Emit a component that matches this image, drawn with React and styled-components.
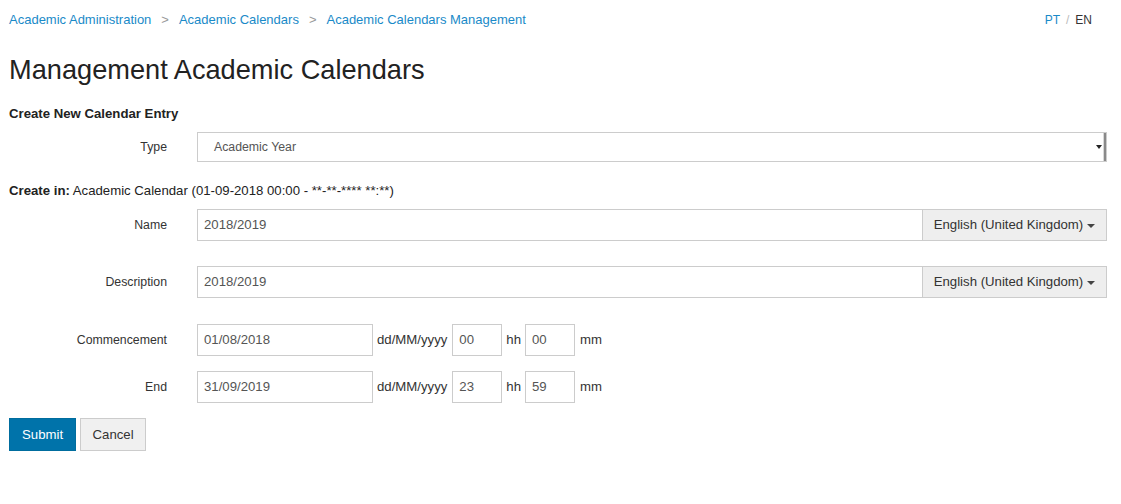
import React from 'react';
import styled, { createGlobalStyle } from 'styled-components';

const GlobalStyle = createGlobalStyle`
  body {
    margin: 0;
    background: #ffffff;
    font-family: "Liberation Sans", Arial, sans-serif;
    color: #333333;
  }
`;

const Page = styled.div`
  padding: 11px 14px 40px 9px;
  font-size: 13.2px;
  line-height: 18px;
`;

const TopBar = styled.div`
  display: flex;
  justify-content: space-between;
  align-items: center;
  height: 18px;
`;

const Crumbs = styled.nav`
  display: flex;
  align-items: center;
  gap: 10px;
  font-size: 13px;
`;

const CrumbLink = styled.a`
  color: #1a8ac8;
  text-decoration: none;
`;

const Sep = styled.span`
  color: #999999;
`;

const Langs = styled.div`
  display: flex;
  gap: 6px;
  margin-right: 15px;
  font-size: 12px;
`;

const Lang = styled.span`
  color: ${(props) => (props.$active ? '#333333' : '#1a8ac8')};
`;

const LangSep = styled.span`
  color: #bbbbbb;
`;

const Title = styled.h1`
  margin: 26px 0 0;
  font-size: 27.2px;
  line-height: 30px;
  font-weight: normal;
  color: #222222;
`;

const Section = styled.h5`
  margin: 20px 0 0;
  font-size: 13.2px;
  line-height: 18px;
  font-weight: bold;
  color: #222222;
`;

const Row = styled.div`
  display: grid;
  grid-template-columns: 158px 1fr;
  column-gap: 30px;
  align-items: center;
  margin-top: ${(props) => props.$top}px;
`;

const Label = styled.label`
  text-align: right;
  font-size: 12.3px;
  color: #333333;
`;

const SelectBox = styled.div`
  position: relative;
  height: 28px;
  border: 1px solid #cccccc;
  display: flex;
  align-items: center;
  padding-left: 16px;
  color: #555555;
  font-size: 12.3px;
`;

const SelectArrow = styled.span`
  position: absolute;
  right: 0;
  top: 0;
  bottom: 0;
  width: 8px;
  border-right: 2px solid #8a8a8a;
  box-shadow: inset -1px 0 0 #d8d8d8;
  &::after {
    content: '';
    position: absolute;
    left: 0;
    top: 12px;
    border-left: 3px solid transparent;
    border-right: 3px solid transparent;
    border-top: 4px solid #222222;
  }
`;

const CreateIn = styled.div`
  margin-top: 20px;
  color: #222222;
  b {
    font-weight: bold;
  }
`;

const Group = styled.div`
  display: flex;
  height: 32px;
`;

const Input = styled.div`
  box-sizing: border-box;
  height: 32px;
  width: ${(props) => (props.$w ? `${props.$w}px` : 'auto')};
  flex: ${(props) => (props.$w ? '0 0 auto' : '1 1 auto')};
  border: 1px solid #cccccc;
  padding: 0 6px;
  display: flex;
  align-items: center;
  color: #555555;
  background: #ffffff;
`;

const AddonButton = styled.div`
  box-sizing: border-box;
  width: 184px;
  border: 1px solid #cccccc;
  border-left: none;
  background: #eeeeee;
  display: flex;
  align-items: center;
  justify-content: center;
  gap: 4px;
  color: #333333;
`;

const Caret = styled.span`
  display: inline-block;
  border-left: 4px solid transparent;
  border-right: 4px solid transparent;
  border-top: 4px solid #444444;
  margin-top: 1px;
`;

const DateLine = styled.div`
  display: flex;
  align-items: center;
  height: 32px;
`;

const Unit = styled.span`
  color: #333333;
  margin: 0 ${(props) => props.$r}px 0 ${(props) => props.$l}px;
`;

const Actions = styled.div`
  display: flex;
  gap: 4px;
  margin-top: 15px;
`;

const Button = styled.button`
  height: 33px;
  padding: 0 ${(props) => (props.$primary ? 12 : 11.5)}px;
  font-family: inherit;
  font-size: 13.2px;
  border: 1px solid ${(props) => (props.$primary ? '#006d9e' : '#cccccc')};
  background: ${(props) => (props.$primary ? '#0073aa' : '#f0f0f0')};
  color: ${(props) => (props.$primary ? '#ffffff' : '#333333')};
  border-radius: 0;
`;

const LocalizedField = ({ label, value, top }) => (
  <Row $top={top}>
    <Label>{label}</Label>
    <Group>
      <Input>{value}</Input>
      <AddonButton>
        English (United Kingdom) <Caret />
      </AddonButton>
    </Group>
  </Row>
);

const DateField = ({ label, date, hh, mm, top }) => (
  <Row $top={top}>
    <Label>{label}</Label>
    <DateLine>
      <Input $w={176}>{date}</Input>
      <Unit $l={4} $r={5}>dd/MM/yyyy</Unit>
      <Input $w={50}>{hh}</Input>
      <Unit $l={4} $r={4}>hh</Unit>
      <Input $w={50}>{mm}</Input>
      <Unit $l={5} $r={0}>mm</Unit>
    </DateLine>
  </Row>
);

const App = () => (
  <>
    <GlobalStyle />
    <Page>
      <TopBar>
        <Crumbs>
          <CrumbLink href="#">Academic Administration</CrumbLink>
          <Sep>&gt;</Sep>
          <CrumbLink href="#">Academic Calendars</CrumbLink>
          <Sep>&gt;</Sep>
          <CrumbLink href="#">Academic Calendars Management</CrumbLink>
        </Crumbs>
        <Langs>
          <Lang>PT</Lang>
          <LangSep>/</LangSep>
          <Lang $active>EN</Lang>
        </Langs>
      </TopBar>
      <Title>Management Academic Calendars</Title>
      <Section>Create New Calendar Entry</Section>
      <Row $top={9}>
        <Label>Type</Label>
        <SelectBox>
          Academic Year
          <SelectArrow />
        </SelectBox>
      </Row>
      <CreateIn>
        <b>Create in:</b> Academic Calendar (01-09-2018 00:00 - **-**-**** **:**)
      </CreateIn>
      <LocalizedField label="Name" value="2018/2019" top={9} />
      <LocalizedField label="Description" value="2018/2019" top={25} />
      <DateField label="Commencement" date="01/08/2018" hh="00" mm="00" top={26} />
      <DateField label="End" date="31/09/2019" hh="23" mm="59" top={15} />
      <Actions>
        <Button $primary>Submit</Button>
        <Button>Cancel</Button>
      </Actions>
    </Page>
  </>
);

export default App;
